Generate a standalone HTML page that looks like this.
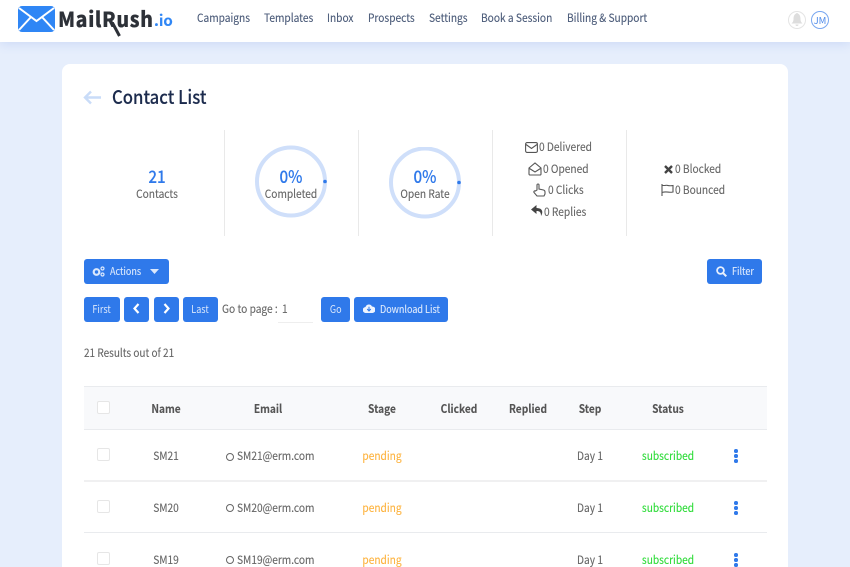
<!DOCTYPE html>
<html><head><meta charset="utf-8"><style>
*{box-sizing:border-box}
html,body{margin:0;padding:0;width:850px;height:567px;overflow:hidden}
#p{position:relative;width:850px;height:567px;overflow:hidden;background:#e6eefc;font-family:"Noto Sans CJK JP","Liberation Sans",sans-serif;color:#555;filter:blur(.3px)}
.a{position:absolute;white-space:nowrap;line-height:20px;transform:scaleX(.87);transform-origin:left center;-webkit-text-stroke:.12px currentColor}
.c{transform:translateX(-50%) scaleX(.87);transform-origin:center center}
.nav{position:absolute;left:0;top:0;width:850px;height:42px;background:#fff;box-shadow:0 2px 10px rgba(90,130,220,.18)}
.n{font-size:11.7px;color:#4a5a78;top:8px}
.card{position:absolute;left:62px;top:64px;width:726px;height:503px;background:#fff;border-radius:8px 8px 0 0}
.v{position:absolute;top:130px;width:1px;height:106px;background:#e9e9e9}
.s{font-size:11.7px;color:#666}
.b{position:absolute;background:#2f79ea;color:#dbe8fc;border-radius:3px;font-size:10.4px;line-height:24px;height:25px;text-align:center;white-space:nowrap}
.b span{display:inline-block;transform:scaleX(.87)}
.w{font-size:10.4px;color:#dbe8fc}
.th{font-size:11.7px;font-weight:700;color:#555;top:398.5px}
.td{font-size:11.7px;color:#666}
.hl{position:absolute;left:84px;width:683px;background:#e9ebee;height:1px}
.cb{position:absolute;left:97px;width:13px;height:13px;border:1px solid #e6e6e6;border-radius:2px;background:#fff}
.o{position:absolute;left:225.5px;width:8px;height:8px;border:1.5px solid #666;border-radius:50%}
.d{position:absolute;left:734px;width:3.6px;height:3.6px;border-radius:50%;background:#2f79ea;box-shadow:0 5px 0 #2f79ea,0 10px 0 #2f79ea}
svg{position:absolute;display:block}
</style></head><body><div id="p">
<div class="nav"></div>
<svg style="left:18px;top:6px" width="37" height="26" viewBox="0 0 37 26"><rect width="37" height="26" rx="4" fill="#2f86f5"/><path d="M1 2 18.500 15 36 2M1 24 13 11M36 24 24 11" stroke="#fff" stroke-width="2" fill="none"/></svg>
<div class="a" style="left:58px;top:5px;font-size:21px;line-height:28px;font-weight:900;color:#2d3138;letter-spacing:.6px;transform:scaleX(.93)">MailRush</div>
<svg style="left:106px;top:22px" width="16" height="15" viewBox="0 0 16 15"><path d="M6 0 13.500 14" stroke="#2d3138" stroke-width="3" fill="none"/></svg>
<div class="a" style="left:154px;top:8px;font-size:15px;font-weight:700;color:#2f86f5;line-height:26px;transform:none">.io</div>
<div class="a n" style="left:197px">Campaigns</div>
<div class="a n" style="left:264px">Templates</div>
<div class="a n" style="left:327px">Inbox</div>
<div class="a n" style="left:368px">Prospects</div>
<div class="a n" style="left:429px">Settings</div>
<div class="a n" style="left:481px">Book a Session</div>
<div class="a n" style="left:567px">Billing &amp; Support</div>
<div style="position:absolute;left:788px;top:11px;width:18px;height:18px;border:1px solid #e4e4e4;border-radius:50%"></div>
<svg style="left:791px;top:13px" width="12" height="14" viewBox="0 0 12 14"><path d="M6 0C3.500 1 2.500 3 2.500 6 2.500 8.500 1.500 9.500 .5 10.500H11.500C10.500 9.500 9.500 8.500 9.500 6 9.500 3 8.500 1 6 0ZM4.500 11.500A1.500 1.500 0 0 0 7.500 11.500Z" fill="#ddd"/></svg>
<div class="a" style="left:811px;top:11px;width:18px;height:18px;border:1px solid #79a7f0;border-radius:50%;font-size:9.5px;line-height:16px;text-align:center;color:#4f8bea;transform:none;-webkit-text-stroke:0">JM</div>

<div class="card"></div>
<svg style="left:83px;top:90px" width="19" height="15" viewBox="0 0 19 15"><path d="M18 7.500H2M8 1.500 2 7.500 8 13.500" stroke="#c9dcf8" stroke-width="2.400" fill="none"/></svg>
<div class="a" style="left:112px;top:84px;font-size:19.2px;line-height:24px;font-weight:500;color:#1c2b4d">Contact List</div>

<div class="v" style="left:224px"></div><div class="v" style="left:358px"></div><div class="v" style="left:492px"></div><div class="v" style="left:626px"></div>

<div class="a c" style="left:157px;top:165.500px;font-size:17.5px;line-height:22px;font-weight:500;color:#2f79ea">21</div>
<div class="a c s" style="left:157px;top:184px">Contacts</div>

<svg style="left:254px;top:145px" width="76" height="75" viewBox="0 0 76 75"><circle cx="37" cy="36.500" r="34" fill="none" stroke="#cfdffa" stroke-width="4"/><circle cx="71" cy="36.500" r="1.800" fill="#2f79ea"/></svg>
<div class="a c" style="left:291px;top:165.500px;font-size:17.5px;line-height:22px;font-weight:500;color:#2f79ea">0%</div>
<div class="a c s" style="left:291px;top:184px">Completed</div>

<svg style="left:388px;top:147px" width="76" height="73" viewBox="0 0 76 73"><circle cx="37" cy="35.500" r="34" fill="none" stroke="#cfdffa" stroke-width="4"/><circle cx="71" cy="35.500" r="1.800" fill="#2f79ea"/></svg>
<div class="a c" style="left:425px;top:165.500px;font-size:17.5px;line-height:22px;font-weight:500;color:#2f79ea">0%</div>
<div class="a c s" style="left:425px;top:184px">Open Rate</div>

<svg style="left:525px;top:142px" width="13" height="11" viewBox="0 0 13 11"><rect x=".6" y=".6" width="11.800" height="9.800" rx="1.500" fill="none" stroke="#555" stroke-width="1.100"/><path d="M1 2.500 6.500 6.500 12 2.500" fill="none" stroke="#555" stroke-width="1.100"/></svg>
<div class="a s" style="left:539px;top:137px">0 Delivered</div>
<svg style="left:528px;top:162px" width="14" height="14" viewBox="0 0 14 14"><path d="M1 6 7 1 13 6V12A1 1 0 0 1 12 13H2A1 1 0 0 1 1 12ZM1.500 6.500 7 10 12.500 6.500" fill="none" stroke="#555" stroke-width="1.100"/></svg>
<div class="a s" style="left:543px;top:159px">0 Opened</div>
<svg style="left:533px;top:183px" width="13" height="14" viewBox="0 0 13 14"><path d="M4 7V2A1 1 0 0 1 6 2V6L10.500 7C11.500 7.300 12 8 12 9V11L11 13H4L1 9.500C.5 8.500 1.500 7.500 2.500 8Z" fill="none" stroke="#555" stroke-width="1.100"/></svg>
<div class="a s" style="left:548px;top:180px">0 Clicks</div>
<svg style="left:531px;top:205px" width="12" height="12" viewBox="0 0 12 12"><path d="M5.500 0 0 4.500 5.500 9V6C8.500 6 10 7 10 11 12.500 7 11.500 3 5.500 3Z" fill="#444"/></svg>
<div class="a s" style="left:544px;top:201.500px">0 Replies</div>
<svg style="left:664px;top:165px" width="9" height="9" viewBox="0 0 9 9"><path d="M1 1 8 8M8 1 1 8" stroke="#444" stroke-width="2.400"/></svg>
<div class="a s" style="left:675px;top:159px">0 Blocked</div>
<svg style="left:661px;top:184px" width="13" height="12" viewBox="0 0 13 12"><path d="M1 0V12M1 1.500H4C6 .5 7 2.500 12 1.500V8C7 9 6 7 1 8.500" fill="none" stroke="#555" stroke-width="1.100"/></svg>
<div class="a s" style="left:675px;top:180px">0 Bounced</div>

<div class="b" style="left:84px;top:259px;width:85px"></div>
<svg style="left:92px;top:266px" width="13" height="11" viewBox="0 0 13 11"><circle cx="4.500" cy="6" r="2.800" fill="none" stroke="#dbe8fc" stroke-width="2.200"/><circle cx="10.500" cy="2.500" r="1.500" fill="none" stroke="#dbe8fc" stroke-width="1.200"/><circle cx="10.500" cy="8.500" r="1.500" fill="none" stroke="#dbe8fc" stroke-width="1.200"/></svg>
<div class="a w" style="left:110px;top:260.500px">Actions</div>
<svg style="left:150px;top:269px" width="9" height="5" viewBox="0 0 9 5"><path d="M0 0H9L4.500 5Z" fill="#dbe8fc"/></svg>
<div class="b" style="left:707px;top:259px;width:55px"></div>
<svg style="left:716px;top:266px" width="11" height="11" viewBox="0 0 11 11"><circle cx="4.500" cy="4.500" r="3.400" fill="none" stroke="#e6effd" stroke-width="1.800"/><path d="M7 7 10.300 10.300" stroke="#e6effd" stroke-width="2"/></svg>
<div class="a w" style="left:732px;top:260.500px">Filter</div>

<div class="b" style="left:84px;top:297px;width:36px"><span>First</span></div>
<div class="b" style="left:124px;top:297px;width:25px"></div>
<svg style="left:133px;top:303px" width="7" height="11" viewBox="0 0 7 11"><path d="M5.500 1 1.500 5.500 5.500 10" fill="none" stroke="#fff" stroke-width="2.200"/></svg>
<div class="b" style="left:154px;top:297px;width:25px"></div>
<svg style="left:163px;top:303px" width="7" height="11" viewBox="0 0 7 11"><path d="M1.500 1 5.500 5.500 1.500 10" fill="none" stroke="#fff" stroke-width="2.200"/></svg>
<div class="b" style="left:183px;top:297px;width:35px"><span>Last</span></div>
<div class="a td" style="left:222px;top:299px">Go to page :</div>
<div class="a td" style="left:282px;top:298.500px">1</div>
<div style="position:absolute;left:278px;top:322px;width:35px;height:1px;background:#eee"></div>
<div class="b" style="left:321px;top:297px;width:29px"><span>Go</span></div>
<div class="b" style="left:354px;top:297px;width:94px"></div>
<svg style="left:363px;top:304px" width="12" height="9" viewBox="0 0 12 9"><path d="M3 9A3 3 0 0 1 2.500 3 3.500 3.500 0 0 1 9 2.500 3.200 3.200 0 0 1 9.500 9Z" fill="#eef4fe"/><path d="M6 2.800V6.800M4.200 5 6 7 7.800 5" stroke="#2f79ea" fill="none"/></svg>
<div class="a w" style="left:380px;top:298.500px">Download List</div>
<div class="a" style="left:84px;top:342.500px;font-size:11.5px;color:#666">21 Results out of 21</div>

<div style="position:absolute;left:84px;top:386px;width:683px;height:44px;background:#f8f9fb"></div>
<div class="hl" style="top:386px"></div><div class="hl" style="top:429px"></div>
<div class="hl" style="top:480px;height:2px;background:#f0f0f1"></div><div class="hl" style="top:532px"></div>
<div class="cb" style="top:401px"></div><div class="cb" style="top:448px"></div><div class="cb" style="top:500px"></div><div class="cb" style="top:552px"></div>

<div class="a c th" style="left:166px">Name</div>
<div class="a c th" style="left:268px">Email</div>
<div class="a c th" style="left:382px">Stage</div>
<div class="a c th" style="left:458.500px">Clicked</div>
<div class="a c th" style="left:527.500px">Replied</div>
<div class="a c th" style="left:590px">Step</div>
<div class="a c th" style="left:668px">Status</div>

<div class="a c td" style="left:166px;top:445.500px">SM21</div><div class="o" style="top:452.500px"></div><div class="a td" style="left:237px;top:445.500px">SM21@erm.com</div><div class="a c td" style="left:382px;top:445.500px;color:#fdb33f">pending</div><div class="a c td" style="left:590px;top:445.500px">Day 1</div><div class="a c td" style="left:668px;top:445.500px;color:#2fdc3a">subscribed</div><div class="d" style="top:449px"></div>

<div class="a c td" style="left:166px;top:497.500px">SM20</div><div class="o" style="top:503.500px"></div><div class="a td" style="left:237px;top:497.500px">SM20@erm.com</div><div class="a c td" style="left:382px;top:497.500px;color:#fdb33f">pending</div><div class="a c td" style="left:590px;top:497.500px">Day 1</div><div class="a c td" style="left:668px;top:497.500px;color:#2fdc3a">subscribed</div><div class="d" style="top:501px"></div>

<div class="a c td" style="left:166px;top:549.500px">SM19</div><div class="o" style="top:555.500px"></div><div class="a td" style="left:237px;top:549.500px">SM19@erm.com</div><div class="a c td" style="left:382px;top:549.500px;color:#fdb33f">pending</div><div class="a c td" style="left:590px;top:549.500px">Day 1</div><div class="a c td" style="left:668px;top:549.500px;color:#2fdc3a">subscribed</div><div class="d" style="top:553px"></div>
</div></body></html>
